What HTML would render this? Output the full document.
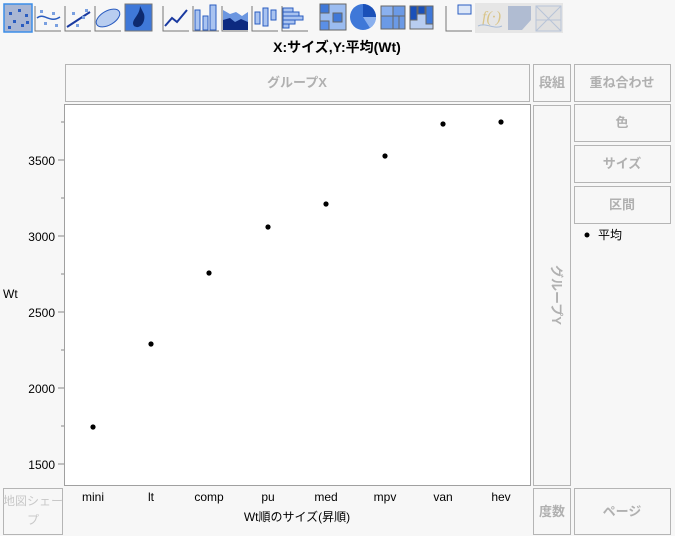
<!DOCTYPE html>
<html><head><meta charset="utf-8"><style>
body{margin:0;background:#f7f7f7;width:675px;height:536px;overflow:hidden;font-family:"Liberation Sans","Noto Sans CJK JP",sans-serif;}
</style></head><body>
<svg width="675" height="536" xmlns="http://www.w3.org/2000/svg" style="position:absolute;left:0;top:0;font-family:'Liberation Sans','Noto Sans CJK JP',sans-serif">
<rect width="675" height="536" fill="#f7f7f7"/>
<!-- toolbar -->
<rect x="4" y="4" width="28" height="28" fill="#a9b6d3" stroke="#3c8ee8" stroke-width="1.5"/>
<g fill="#2a5cc0"><rect x="9" y="12" width="3" height="3"/><rect x="18" y="9" width="3" height="3"/><rect x="25" y="14" width="3" height="3"/><rect x="13" y="20" width="3" height="3"/><rect x="21" y="24" width="3" height="3"/><rect x="8" y="26" width="3" height="3"/><rect x="26" y="21" width="3" height="3"/></g>
<g stroke="#777" fill="none"><path d="M35 6V31H61"/><path d="M65 6V31H91"/><path d="M95 6V31H121"/><path d="M163 6V31H189"/><path d="M193 6V31H219"/><path d="M222 6V31H248"/><path d="M252 6V31H278"/><path d="M282 6V31H308"/><path d="M446 6V31H472"/></g>
<path d="M37 18C44 12 50 24 60 17" stroke="#2a5cc0" fill="none" stroke-width="1.5"/>
<g fill="#7aa0e0"><rect x="40" y="10" width="3" height="3"/><rect x="52" y="12" width="3" height="3"/><rect x="44" y="22" width="3" height="3"/><rect x="55" y="24" width="3" height="3"/></g>
<path d="M67 27L90 12" stroke="#1a3aa0" stroke-width="2"/>
<g fill="#7aa0e0"><rect x="72" y="12" width="3" height="3"/><rect x="82" y="16" width="3" height="3"/><rect x="76" y="24" width="3" height="3"/><rect x="85" y="9" width="3" height="3"/></g>
<ellipse cx="108" cy="18" rx="13" ry="7" transform="rotate(-30 108 18)" fill="#b8cdf0" stroke="#2a5cc0"/>
<rect x="125" y="4" width="27" height="27" fill="#3f78d8" stroke="#777"/>
<path d="M140 6C140 16 130 20 134 26C140 30 146 22 144 14" fill="#0d2a70"/>
<path d="M165 26L172 18L177 22L187 10" stroke="#1a3aa0" stroke-width="2" fill="none"/>
<g fill="#a9c3f0" stroke="#2a5cc0"><rect x="195" y="10" width="5" height="20"/><rect x="203" y="16" width="5" height="14"/><rect x="210" y="5" width="6" height="25"/></g>
<path d="M223 10L230 14L236 12L242 16L248 12V30H223Z" fill="#6b96e0"/>
<path d="M223 20L230 18L235 22L241 19L248 22V30H223Z" fill="#0d2a80"/>
<g fill="#a9c3f0" stroke="#2a5cc0"><rect x="255" y="12" width="5" height="12"/><rect x="263" y="8" width="5" height="18"/><rect x="271" y="10" width="5" height="10"/></g>
<g fill="#a9c3f0" stroke="#2a5cc0"><rect x="283" y="8" width="10" height="4"/><rect x="283" y="12" width="16" height="4"/><rect x="283" y="16" width="20" height="4"/><rect x="283" y="20" width="12" height="4"/><rect x="283" y="24" width="6" height="4"/></g>
<g stroke="#666"><rect x="320" y="4" width="26" height="26" fill="#9bbcf0"/><rect x="320" y="4" width="9" height="9" fill="#3f78d8"/><rect x="333" y="13" width="9" height="9" fill="#3f78d8"/><rect x="320" y="21" width="9" height="9" fill="#5a8fe6"/></g>
<circle cx="363" cy="17" r="13" fill="#3f78d8"/><path d="M363 17L363 4A13 13 0 0 1 376 17Z" fill="#1a50b8"/><path d="M363 17L376 17A13 13 0 0 1 370 28Z" fill="#8ab0ee"/>
<g stroke="#666"><rect x="381" y="6" width="24" height="23" fill="#6b9ae6"/><rect x="381" y="6" width="12" height="10" fill="#8ab0ee"/><path d="M381 16H405M393 6V29M399 16V29" fill="none"/></g>
<g stroke="#666"><rect x="410" y="6" width="23" height="23" fill="#b8cdf0"/><rect x="410" y="6" width="7" height="14" fill="#1a50b8"/><rect x="418" y="6" width="7" height="8" fill="#1a50b8"/><rect x="426" y="6" width="7" height="18" fill="#3f78d8"/></g>
<rect x="458" y="5" width="13" height="9" fill="#dde7f7" stroke="#2a5cc0"/>
<rect x="475" y="3" width="88" height="30" fill="#e6e6e6"/>
<text x="482" y="22" font-size="16" font-style="italic" fill="#d9c58a" font-family="Liberation Serif,serif">f(·)</text>
<path d="M478 26C486 22 494 30 502 26" stroke="#a9bcd8" fill="none"/>
<path d="M508 6H531V20L522 30H508Z" fill="#b0bcd2"/>
<rect x="536" y="6" width="25" height="25" fill="#e0e0e0" stroke="#b8c4d8"/><path d="M536 6L561 31M561 6L536 31M536 20H561" stroke="#b8c4d8"/>
<text x="337" y="52" font-size="14" font-weight="bold" text-anchor="middle" fill="#000">X:サイズ,Y:平均(Wt)</text>
<!-- drop zones -->
<g fill="#f7f7f7" stroke="#b5b5b5">
<rect x="65.5" y="64.5" width="464" height="37"/>
<rect x="533.5" y="64.5" width="37" height="37"/>
<rect x="574.5" y="64.5" width="96" height="37"/>
<rect x="574.5" y="104.5" width="96" height="37"/>
<rect x="574.5" y="145.5" width="96" height="37"/>
<rect x="574.5" y="186.5" width="96" height="37"/>
<rect x="533.5" y="105.5" width="37" height="380"/>
<rect x="3.5" y="488.5" width="59" height="46"/>
<rect x="533.5" y="488.5" width="37" height="46"/>
<rect x="574.5" y="488.5" width="96" height="46"/>
</g>
<g fill="#b0b0b0" font-size="13" font-weight="bold" text-anchor="middle">
<text x="297" y="87">グループX</text>
<text x="552" y="87">段組</text>
<text x="622" y="87">重ね合わせ</text>
<text x="622" y="127">色</text>
<text x="622" y="168">サイズ</text>
<text x="622" y="209">区間</text>
<text x="552" y="516">度数</text>
<text x="622" y="516">ページ</text>
<text x="552" y="295" transform="rotate(90 552 295)">グループY</text>
</g>
<g fill="#c8c8c8" font-size="12" text-anchor="middle"><text x="33" y="505">地図シェー</text><text x="33" y="524">プ</text></g>
<circle cx="587" cy="235" r="2.5" fill="#000"/>
<text x="598" y="239" font-size="12" fill="#000">平均</text>
<!-- plot -->
<rect x="64.5" y="104.5" width="466" height="381" fill="#fff" stroke="#a0a0a0"/>
<g stroke="#888">
<path d="M58 160H64M58 236H64M58 312H64M58 388H64M58 464H64"/>
<path d="M61 122H64M61 198H64M61 274H64M61 350H64M61 426H64"/>
</g>
<g font-size="12" fill="#000" text-anchor="end">
<text x="55" y="165">3500</text><text x="55" y="241">3000</text><text x="55" y="317">2500</text><text x="55" y="393">2000</text><text x="55" y="469">1500</text>
</g>
<text x="3" y="298" font-size="12" fill="#000">Wt</text>
<g fill="#000"><circle cx="93" cy="427" r="2.6"/><circle cx="151" cy="344" r="2.6"/><circle cx="209" cy="273" r="2.6"/><circle cx="268" cy="227" r="2.6"/><circle cx="326" cy="204" r="2.6"/><circle cx="385" cy="156" r="2.6"/><circle cx="443" cy="124" r="2.6"/><circle cx="501" cy="122" r="2.6"/></g>
<g font-size="12" fill="#000" text-anchor="middle">
<text x="93" y="501">mini</text><text x="151" y="501">lt</text><text x="209" y="501">comp</text><text x="268" y="501">pu</text><text x="326" y="501">med</text><text x="385" y="501">mpv</text><text x="443" y="501">van</text><text x="501" y="501">hev</text>
<text x="297" y="521">Wt順のサイズ(昇順)</text>
</g>
</svg>
</body></html>
